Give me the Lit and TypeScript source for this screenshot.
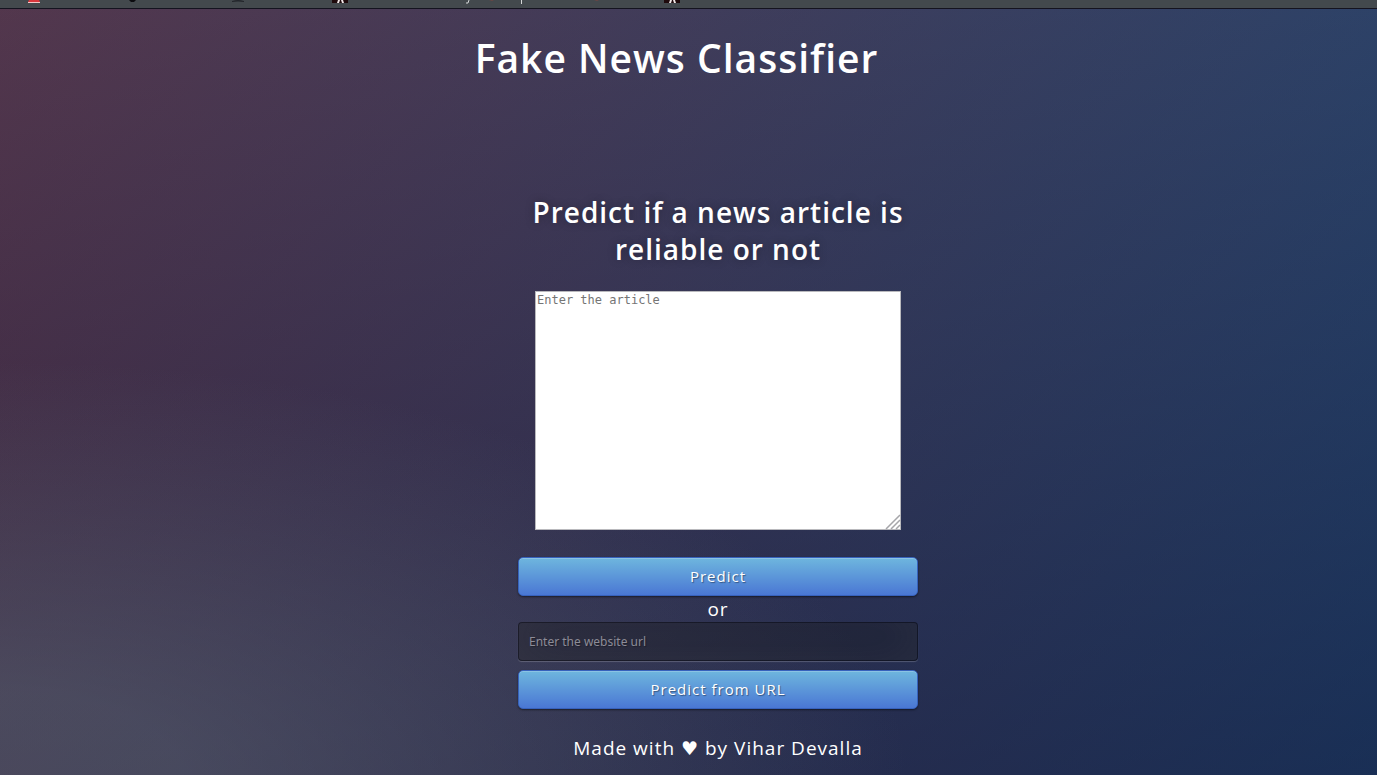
import { LitElement, html, css } from "lit";
import { customElement, state } from "lit/decorators.js";

@customElement("bookmark-strip")
export class BookmarkStrip extends LitElement {
  static styles = css`
    :host {
      display: block;
      background: #43494d;
      border-bottom: 1px solid #14131f;
    }
    .glyphs {
      display: block;
      width: 700px;
      height: 8px;
    }
  `;

  render() {
    return html`
      <svg class="glyphs" viewBox="0 0 700 8" aria-hidden="true">
        <path d="M29 0h10l1 2H28z" fill="#d9363c" />
        <path d="M28 2h12v1H28z" fill="#f3c8c8" />
        <path d="M129 0h7l-2 2h-3z" fill="#0b0b0f" />
        <path d="M232 1q6-2 12 0v1q-6-1-12 0z" fill="#23262b" />
        <path d="M332 0h16v3h-16zM664 0h16v3h-16z" fill="#1f0a0c" />
        <path d="M338 0h2l-1 3h-2zM341 0h2l1 3h-2zM670 0h2l-1 3h-2zM673 0h2l1 3h-2z" fill="#f0e6e6" />
        <path d="M469 0l-1 3h-2" fill="none" stroke="#d5d7d8" />
        <path d="M521 0h1v4h-1z" fill="#d5d7d8" />
        <path d="M489 0h5l-2 1zM594 0h5l-2 1z" fill="#6b4645" />
      </svg>
    `;
  }
}

@customElement("app-root")
export class AppRoot extends LitElement {
  static styles = css`
    :host {
      display: flex;
      flex-direction: column;
      min-height: 100vh;
      box-sizing: border-box;
      color: #fff;
      font-family: "Open Sans", "Noto Sans", sans-serif;
      font-size: 19px;
      line-height: 26px;
      letter-spacing: 1px;
      text-align: center;
    }
    .page {
      flex: 1;
      display: flex;
      flex-direction: column;
      background:
        radial-gradient(ellipse 165% 135% at 0% 100%, rgba(104, 128, 138, 0.38) 8%, rgba(138, 114, 76, 0) 40%),
        linear-gradient(to bottom, rgba(57, 173, 219, 0.25) 0%, rgba(42, 60, 87, 0.4) 100%),
        linear-gradient(135deg, #5b0f1d 0%, #0e2654 100%);
    }
    .banner {
      padding: 22px 24px 0 0;
    }
    h1,
    h2,
    p {
      margin: 0;
    }
    h1 {
      font-size: 39px;
      line-height: 54px;
      font-weight: 600;
    }
    .panel {
      display: flex;
      flex-direction: column;
      align-items: center;
      padding: 109px 0 0 59px;
    }
    h2 {
      width: 400px;
      max-width: 100%;
      margin-bottom: 23px;
      font-size: 28px;
      line-height: 37px;
      font-weight: 600;
      text-shadow: 0 0 10px rgba(0, 0, 0, 0.3);
    }
    form {
      display: flex;
      flex-direction: column;
      align-items: center;
      width: 400px;
      max-width: 100%;
    }
    .article {
      display: grid;
      width: 366px;
      max-width: 100%;
      margin: 0 0 27px;
    }
    .article > * {
      grid-area: 1 / 1;
    }
    textarea {
      display: block;
      box-sizing: border-box;
      width: 100%;
      height: 239px;
      margin: 0;
      padding: 1px;
      border: 1px solid #b9b9bd;
      border-radius: 0;
      background: #fff;
      color: #000;
      font: 12px/14px "DejaVu Sans Mono", monospace;
    }
    textarea::-webkit-resizer {
      background: #fff;
    }
    textarea::placeholder {
      color: #757575;
    }
    .grip {
      place-self: end;
      width: 16px;
      height: 16px;
      z-index: 1;
      pointer-events: none;
    }
    button {
      width: 100%;
      box-sizing: border-box;
      height: 39px;
      padding: 0 14px 2px;
      border: 1px solid #3762bc;
      border-radius: 5px;
      background: linear-gradient(to bottom, #6eb6de, #4a77d4);
      box-shadow: inset 0 1px 0 rgba(255, 255, 255, 0.2), 0 1px 2px rgba(0, 0, 0, 0.5);
      color: #fff;
      font-family: inherit;
      font-size: 15px;
      line-height: 20px;
      letter-spacing: 1px;
      text-shadow: 1px 1px 1px rgba(0, 0, 0, 0.4);
      cursor: pointer;
    }
    input {
      width: 100%;
      box-sizing: border-box;
      height: 39px;
      margin: 0 0 9px;
      padding: 10px;
      border: 1px solid rgba(0, 0, 0, 0.3);
      border-radius: 4px;
      background: rgba(0, 0, 0, 0.3);
      box-shadow: inset 0 -5px 45px rgba(100, 100, 100, 0.2), 0 1px 1px rgba(255, 255, 255, 0.2);
      color: #fff;
      font: 12px/16px "Noto Sans", "Open Sans", sans-serif;
      text-shadow: 1px 1px 1px rgba(0, 0, 0, 0.3);
    }
    input::placeholder {
      color: #8d8c97;
    }
    .credit {
      margin: 26px 0 0;
      padding-bottom: 12px;
    }
    .heart {
      font-family: "DejaVu Sans", sans-serif;
      line-height: 1;
    }
  `;

  @state() private article = "";
  @state() private url = "";

  private onArticle(e: Event) {
    this.article = (e.target as HTMLTextAreaElement).value;
  }

  private onUrl(e: Event) {
    this.url = (e.target as HTMLInputElement).value;
  }

  private onSubmit(e: Event) {
    e.preventDefault();
  }

  render() {
    return html`
      <bookmark-strip></bookmark-strip>
      <div class="page">
        <header class="banner"><h1>Fake News Classifier</h1></header>
        <main class="panel">
          <h2>Predict if a news article is reliable or not</h2>
          <form @submit=${this.onSubmit}>
            <div class="article">
              <textarea
                aria-label="Enter the article"
                placeholder="Enter the article"
                .value=${this.article}
                @input=${this.onArticle}
              ></textarea>
              <svg class="grip" viewBox="0 0 16 16" aria-hidden="true">
                <path
                  d="M1 15L15 1M6 15L15 6M11 15L15 11"
                  fill="none"
                  stroke="#a6a6aa"
                  stroke-width="1.5"
                />
              </svg>
            </div>
            <button type="submit">Predict</button>
          </form>
          <p>or</p>
          <form @submit=${this.onSubmit}>
            <input
              type="text"
              aria-label="Enter the website url"
              placeholder="Enter the website url"
              .value=${this.url}
              @input=${this.onUrl}
            />
            <button type="submit">Predict from URL</button>
          </form>
          <p class="credit">Made with <span class="heart">♥</span> by Vihar Devalla</p>
        </main>
      </div>
    `;
  }
}
